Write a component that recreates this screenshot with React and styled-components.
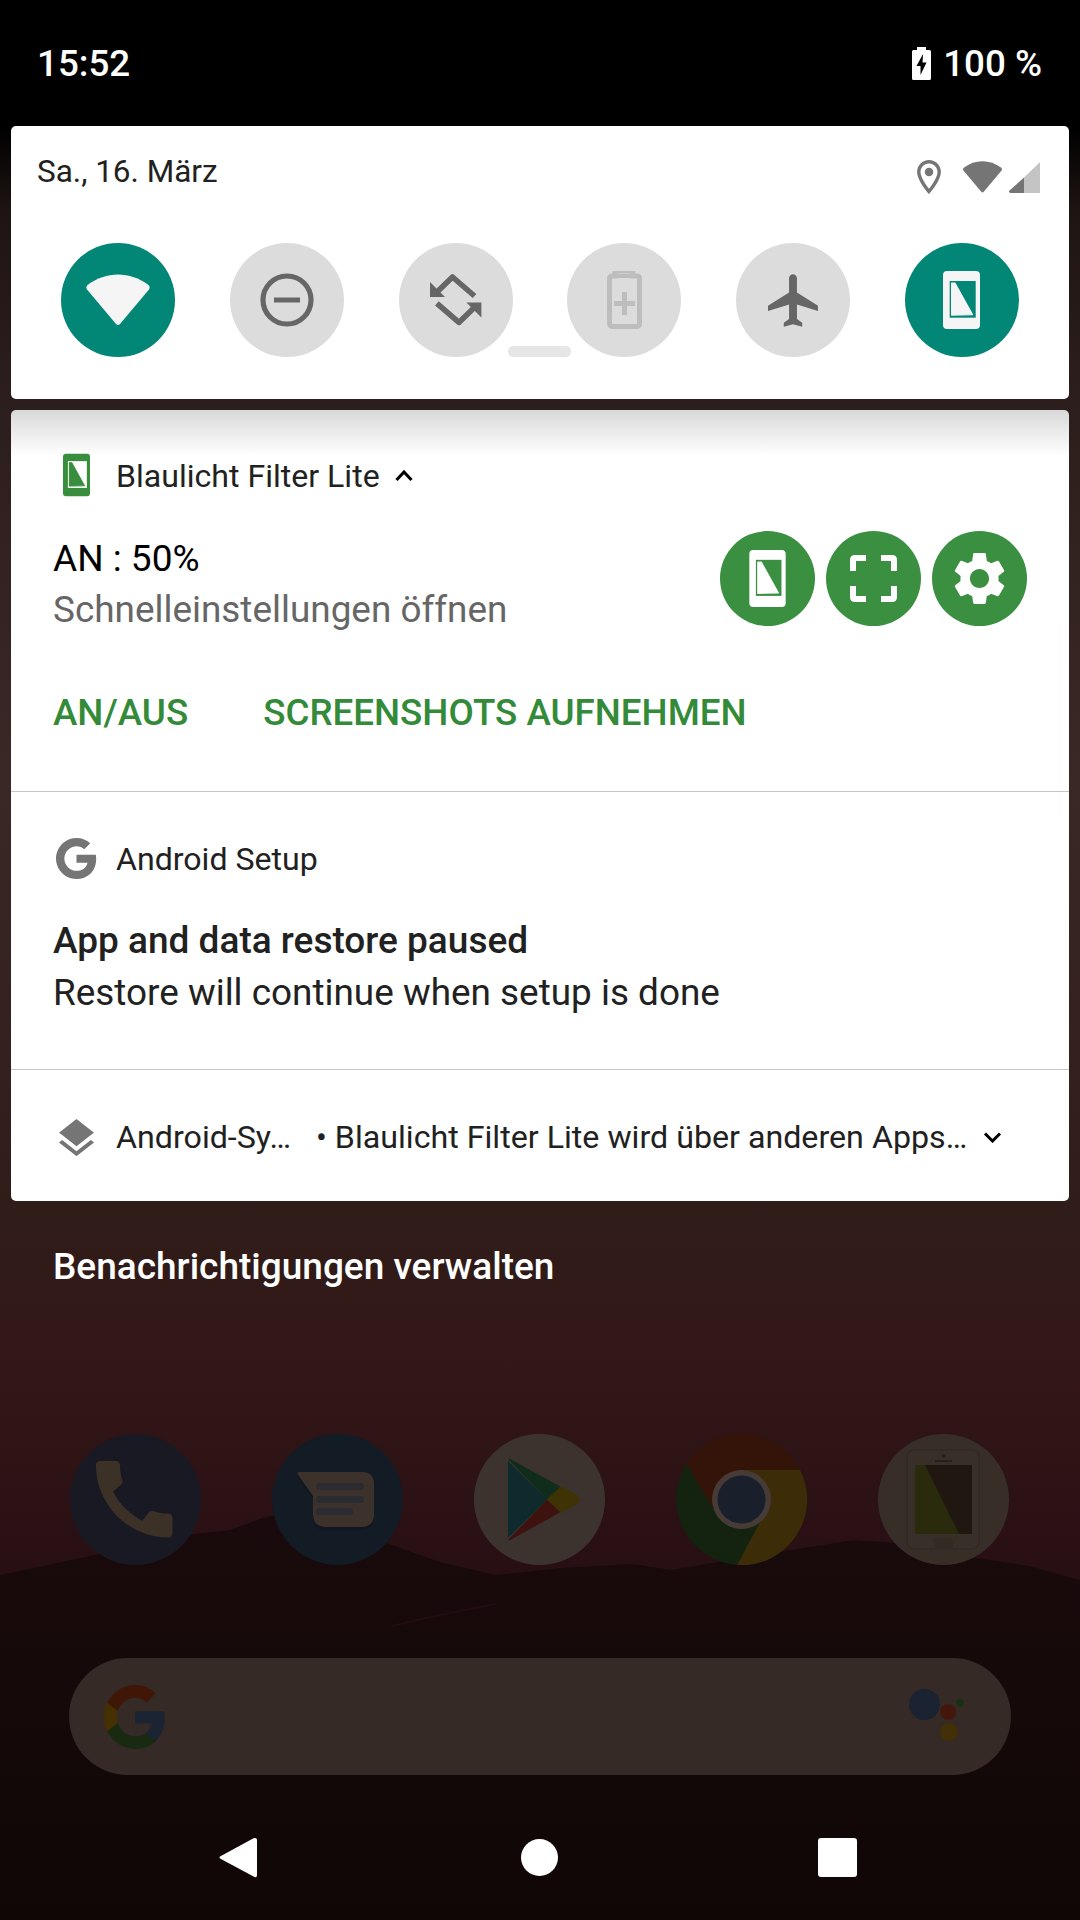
import React from "react";
import styled, { createGlobalStyle } from "styled-components";

const Global = createGlobalStyle`
  html, body { margin: 0; padding: 0; background: #000; }
  * { box-sizing: border-box; }
`;

const Screen = styled.div`
  position: relative;
  width: 1080px;
  height: 1920px;
  overflow: hidden;
  display: flex;
  flex-direction: column;
  font-family: Roboto, "Liberation Sans", sans-serif;
  background: linear-gradient(
    180deg,
    #000 0,
    #000 126px,
    #1e1513 210px,
    #2c1e1c 400px,
    #3a2825 780px,
    #301d1a 1200px,
    #321616 1400px,
    #280f14 1570px
  );
`;

const Wallpaper = styled.svg`
  position: absolute;
  left: 0;
  top: 1500px;
  width: 1080px;
  height: 420px;
`;

const StatusBar = styled.div`
  height: 126px;
  flex: none;
  display: flex;
  align-items: center;
  justify-content: space-between;
  padding: 0 38px 0 37px;
  color: #fff;
  font-size: 36.75px;
  font-weight: 500;
  position: relative;
`;

const StatusRight = styled.div`
  display: flex;
  align-items: center;
  gap: 12px;
`;

const ChargingBattery = styled.svg`
  width: 19px;
  height: 33px;
  margin-top: 1px;
`;

const Card = styled.div`
  position: relative;
  margin: 0 11px;
  background: #fff;
  border-radius: 5px;
  flex: none;
`;

const QsCard = styled(Card)`
  height: 273px;
  padding: 0 26px;
`;

const QsHeader = styled.div`
  height: 117px;
  display: flex;
  align-items: center;
  justify-content: space-between;
  padding: 0 3px 27px 0;
  color: #212121;
  font-size: 31.5px;
`;

const QsStatusIcons = styled.div`
  display: flex;
  align-items: center;
  gap: 21px;
  padding-top: 11px;
`;

const GroupTight = styled.div`
  display: flex;
  gap: 6px;
  align-items: flex-end;
`;

const QsRow = styled.div`
  display: flex;
  justify-content: space-between;
  padding: 0 24px;
`;

const QsTile = styled.div`
  width: 114px;
  height: 114px;
  border-radius: 50%;
  flex: none;
  display: flex;
  align-items: center;
  justify-content: center;
  background: ${(p) => (p.$on ? "#028675" : "#dcdcdc")};
`;

const Handle = styled.div`
  position: absolute;
  left: 497px;
  top: 220px;
  width: 63px;
  height: 11px;
  border-radius: 5px;
  background: #e6e6e6;
`;

const NotifCard = styled(Card)`
  margin-top: 11px;
  height: 791px;
  display: flex;
  flex-direction: column;
  background: linear-gradient(180deg, #d8d8d8 0, #ffffff 46px);
`;

const NotifFirst = styled.section`
  height: 382px;
  flex: none;
  border-bottom: 1.5px solid #c6c6c6;
  padding: 43px 42px 0 42px;
`;

const NotifSecond = styled.section`
  height: 278px;
  flex: none;
  border-bottom: 1.5px solid #c6c6c6;
  padding: 44px 34px 0 42px;
`;

const NotifThird = styled.section`
  flex: 1;
  display: flex;
  align-items: center;
  padding: 3px 67px 0 42px;
`;

const HeaderLine = styled.div`
  display: flex;
  align-items: center;
  height: 44px;
`;

const IconSlot = styled.div`
  width: 63px;
  flex: none;
  display: flex;
  align-items: center;
  padding-left: ${(p) => p.$pad || 0}px;
`;

const AppName = styled.span`
  font-size: 32.1px;
  padding-top: 2px;
  color: #212121;
  white-space: nowrap;
`;

const ChevronUp = styled.svg`
  width: 18px;
  height: 11px;
  margin-left: 15px;
`;

const ChevronDown = styled.svg`
  width: 19px;
  height: 11px;
  flex: none;
`;

const Body = styled.div`
  display: flex;
  justify-content: space-between;
  align-items: flex-start;
  margin-top: 34px;
`;

const TextCol = styled.div`
  display: flex;
  flex-direction: column;
  padding-top: 2px;
`;

const Title = styled.div`
  font-size: 37px;
  line-height: 51px;
  color: ${(p) => (p.$strong ? "#212121" : "#000")};
  font-weight: ${(p) => (p.$strong ? 500 : 400)};
`;

const SubText = styled.div`
  font-size: 36.9px;
  line-height: 51px;
  margin-top: ${(p) => p.$gap || 0}px;
  color: ${(p) => p.$color};
`;

const ActionCircles = styled.div`
  display: flex;
  gap: 11px;
`;

const ActionCircle = styled.div`
  width: 95px;
  height: 95px;
  border-radius: 50%;
  background: #3a8f40;
  display: flex;
  align-items: center;
  justify-content: center;
`;

const Actions = styled.div`
  display: flex;
  gap: 75px;
  margin-top: 56px;
`;

const ActionText = styled.span`
  font-size: 36.75px;
  font-weight: 500;
  line-height: 44px;
  color: #338a38;
`;

const SetupText = styled.div`
  margin-top: 35px;
`;

const CollapsedName = styled.span`
  font-size: 32.2px;
  color: #212121;
  width: 200px;
  flex: none;
  white-space: nowrap;
`;

const CollapsedText = styled.span`
  font-size: 32.2px;
  color: #212121;
  flex: 1;
  white-space: nowrap;
`;

const ManageLink = styled.div`
  flex: none;
  padding: 42px 0 0 53px;
  height: 233px;
  color: #fff;
  font-size: 37px;
  font-weight: 500;
  line-height: 48px;
  position: relative;
`;

const Hotseat = styled.div`
  position: relative;
  flex: none;
  height: 224px;
  display: flex;
  justify-content: space-between;
  padding: 0 71px 0 70px;
`;

const AppIcon = styled.svg`
  width: 131px;
  height: 131px;
  flex: none;
`;

const SearchBar = styled.div`
  position: relative;
  flex: none;
  margin: 0 69px;
  height: 117px;
  border-radius: 59px;
  background: #352a26;
  display: flex;
  align-items: center;
  justify-content: space-between;
  padding: 0 42px 0 35px;
`;

const AssistantDots = styled.svg`
  width: 60px;
  height: 60px;
  margin-top: 5px;
`;

const NavBar = styled.div`
  position: relative;
  flex: none;
  height: 145px;
  display: flex;
  align-items: center;
  padding: 20px 0 0 219px;
`;

const NavSlot = styled.div`
  width: ${(p) => p.$w}px;
  flex: none;
  display: flex;
  align-items: center;
`;

const HomeDot = styled.div`
  width: 37px;
  height: 37px;
  border-radius: 50%;
  background: #fff;
`;

const RecentBox = styled.div`
  width: 39px;
  height: 39px;
  border-radius: 3px;
  background: #fff;
`;

const FilterIcon = ({ w, h, body, screen, tri }) => (
  <svg width={w} height={h} viewBox="0 0 37 58">
    <rect x="0" y="0" width="37" height="58" rx="4" fill={body} />
    <rect x="6.7" y="10" width="26" height="36.7" fill={screen} />
    <path
      d="M8.7 12.3 L12 12.3 L29.4 43.6 L8.7 44 Z"
      fill={tri}
      stroke={tri}
      strokeWidth="1.4"
      strokeLinejoin="round"
    />
  </svg>
);

const Fan = ({ w, h, fill }) => (
  <svg width={w} height={h} viewBox="0 0 64 52">
    <path
      d="M1.5 11 C20 -3 44 -3 62.5 11 Q64.5 13 63 15.5 L34 50 Q32 52 30 50 L1 15.5 Q-.5 13 1.5 11Z"
      fill={fill}
    />
  </svg>
);

const GoogleG = ({ size, w, h, blue, green, yellow, red }) => (
  <svg width={w || size} height={h || size} viewBox="1 1 22 22" preserveAspectRatio="none">
    <path
      d="M22.56 12.25c0-.78-.07-1.53-.2-2.25H12v4.26h5.92c-.26 1.37-1.04 2.53-2.21 3.31v2.77h3.57c2.08-1.92 3.28-4.74 3.28-8.09z"
      fill={blue}
    />
    <path
      d="M12 23c2.97 0 5.46-.98 7.28-2.66l-3.57-2.77c-.98.66-2.23 1.06-3.71 1.06-2.86 0-5.29-1.93-6.16-4.53H2.18v2.84C3.99 20.53 7.7 23 12 23z"
      fill={green}
    />
    <path
      d="M5.84 14.09c-.22-.66-.35-1.36-.35-2.09s.13-1.43.35-2.09V7.07H2.18C1.43 8.55 1 10.22 1 12s.43 3.45 1.18 4.93l2.85-2.22.81-.62z"
      fill={yellow}
    />
    <path
      d="M12 5.38c1.62 0 3.06.56 4.21 1.64l3.15-3.15C17.45 2.09 14.97 1 12 1 7.7 1 3.99 3.47 2.18 7.07l3.66 2.84c.87-2.6 3.3-4.53 6.16-4.53z"
      fill={red}
    />
  </svg>
);

const RotateHalf = () => (
  <>
    <path
      d="M44.5 22 L22.5 3 L6 19"
      fill="none"
      stroke="#666"
      strokeWidth="5.6"
      strokeLinejoin="round"
    />
    <path d="M0 23 V8 L15 23 Z" fill="#666" />
  </>
);

const gearPath =
  "M19.14 12.94c.04-.3.06-.61.06-.94 0-.32-.02-.64-.07-.94l2.03-1.58c.18-.14.23-.41.12-.61l-1.92-3.32c-.12-.22-.37-.29-.59-.22l-2.39.96c-.5-.38-1.03-.7-1.62-.94l-.36-2.54c-.04-.24-.24-.41-.48-.41h-3.84c-.24 0-.43.17-.47.41l-.36 2.54c-.59.24-1.13.57-1.62.94l-2.39-.96c-.22-.08-.47 0-.59.22L2.74 8.87c-.12.21-.08.47.12.61l2.03 1.58c-.05.3-.09.63-.09.94s.02.64.07.94l-2.03 1.58c-.18.14-.23.41-.12.61l1.92 3.32c.12.22.37.29.59.22l2.39-.96c.5.38 1.03.7 1.62.94l.36 2.54c.05.24.24.41.48.41h3.84c.24 0 .44-.17.47-.41l.36-2.54c.59-.24 1.13-.56 1.62-.94l2.39.96c.22.08.47 0 .59-.22l1.92-3.32c.12-.22.07-.47-.12-.61l-2.01-1.58zM12 15.6c-1.98 0-3.6-1.62-3.6-3.6s1.62-3.6 3.6-3.6 3.6 1.62 3.6 3.6-1.62 3.6-3.6 3.6z";

export default function App() {
  return (
    <Screen>
      <Global />
      <Wallpaper viewBox="0 1500 1080 420">
        <defs>
          <linearGradient id="hill" x1="0" y1="0" x2="0" y2="1">
            <stop offset="0" stopColor="#1a0a0d" />
            <stop offset="0.45" stopColor="#150909" />
            <stop offset="1" stopColor="#100606" />
          </linearGradient>
        </defs>
        <path
          d="M0 1575 L95 1555 L185 1535 L230 1530 L262 1518 L290 1512 L330 1522 L392 1545 L440 1562 L496 1575 L560 1568 L634 1564 L671 1570 L730 1560 L778 1552 L854 1540 L910 1544 L964 1556 L1030 1566 L1080 1580 L1080 1920 L0 1920 Z"
          fill="url(#hill)"
        />
        <path d="M392 1626 Q450 1612 496 1604" stroke="#220c13" strokeWidth="2" fill="none" />
      </Wallpaper>

      <StatusBar>
        <span>15:52</span>
        <StatusRight>
          <ChargingBattery viewBox="0 0 19 33">
            <path
              d="M5 0 H14 V3 H17.5 Q19 3 19 4.5 V31.5 Q19 33 17.5 33 H1.5 Q0 33 0 31.5 V4.5 Q0 3 1.5 3 H5 Z"
              fill="#fff"
            />
            <path d="M11 7 L4.5 19 H8.5 V28 L14.5 15.5 H10.5 Z" fill="#000" />
          </ChargingBattery>
          <span>100 %</span>
        </StatusRight>
      </StatusBar>

      <QsCard>
        <QsHeader>
          <span>Sa., 16. März</span>
          <QsStatusIcons>
            <svg width="24" height="34" viewBox="5 2 14 20">
              <path
                d="M12 2C8.13 2 5 5.13 5 9c0 5.25 7 13 7 13s7-7.75 7-13c0-3.87-3.13-7-7-7zM7 9c0-2.76 2.24-5 5-5s5 2.24 5 5c0 2.88-2.88 7.19-5 9.88C9.92 16.21 7 11.85 7 9z"
                fill="#757575"
              />
              <circle cx="12" cy="9" r="2.5" fill="#757575" />
            </svg>
            <GroupTight>
              <Fan w={41} h={32} fill="#757575" />
              <svg width="31" height="31" viewBox="0 0 31 31">
                <path d="M31 0 V31 H15 V15.5 Z" fill="#c4c4c4" />
                <path d="M15 15.5 V31 H2 Q0 31 0 29.5 V29 Z" fill="#757575" />
              </svg>
            </GroupTight>
          </QsStatusIcons>
        </QsHeader>
        <QsRow>
          <QsTile $on>
            <Fan w={64} h={52} fill="#f5f5f5" />
          </QsTile>
          <QsTile>
            <svg width="54" height="54" viewBox="0 0 54 54">
              <circle cx="27" cy="27" r="24" fill="none" stroke="#666" strokeWidth="5.2" />
              <rect x="14" y="24.5" width="26" height="5" fill="#666" />
            </svg>
          </QsTile>
          <QsTile>
            <svg width="52" height="52" viewBox="0 0 52 52">
              <RotateHalf />
              <g transform="rotate(180 25.7 25.7)">
                <RotateHalf />
              </g>
            </svg>
          </QsTile>
          <QsTile>
            <svg width="35" height="58" viewBox="0 0 35 58">
              <path
                d="M8 5 V0 H26 V5 H30 Q32.5 5 32.5 8 V52 Q32.5 55.5 29 55.5 H6 Q2.5 55.5 2.5 52 V8 Q2.5 5 5 5 Z"
                fill="none"
                stroke="#bdbdbd"
                strokeWidth="5"
              />
              <path d="M8 3 H26 V7 H8 Z" fill="#bdbdbd" />
              <path d="M15 21 H20 V30 H28 V35 H20 V44 H15 V35 H7 V30 H15 Z" fill="#bdbdbd" />
            </svg>
          </QsTile>
          <QsTile>
            <svg width="50" height="53" viewBox="2 2 19 20">
              <path
                d="M21 16v-2l-8-5V3.5c0-.83-.67-1.5-1.5-1.5S10 2.67 10 3.5V9l-8 5v2l8-2.5V19l-2 1.5V22l3.5-1 3.5 1v-1.5L13 19v-5.5l8 2.5z"
                fill="#666"
              />
            </svg>
          </QsTile>
          <QsTile $on>
            <FilterIcon w={37} h={58} body="#f5f5f5" screen="#028675" tri="#f5f5f5" />
          </QsTile>
        </QsRow>
        <Handle />
      </QsCard>

      <NotifCard>
        <NotifFirst>
          <HeaderLine>
            <IconSlot $pad={10}>
              <FilterIcon w={27} h={44} body="#388e3c" screen="#fff" tri="#388e3c" />
            </IconSlot>
            <AppName>Blaulicht Filter Lite</AppName>
            <ChevronUp viewBox="0 0 18 11">
              <path d="M1.5 10 L9 2 L16.5 10" fill="none" stroke="#000" strokeWidth="3" />
            </ChevronUp>
          </HeaderLine>
          <Body>
            <TextCol>
              <Title>AN : 50%</Title>
              <SubText $color="#666">Schnelleinstellungen öffnen</SubText>
            </TextCol>
            <ActionCircles>
              <ActionCircle>
                <FilterIcon w={37} h={57} body="#fff" screen="#3a8f40" tri="#fff" />
              </ActionCircle>
              <ActionCircle>
                <svg width="47" height="47" viewBox="0 0 47 47">
                  <path
                    d="M3 16 V5 Q3 3 5 3 H16 M31 3 H42 Q44 3 44 5 V16 M44 31 V42 Q44 44 42 44 H31 M16 44 H5 Q3 44 3 42 V31"
                    fill="none"
                    stroke="#fff"
                    strokeWidth="6"
                  />
                </svg>
              </ActionCircle>
              <ActionCircle>
                <svg width="51" height="53" viewBox="2.6 2 18.8 20">
                  <path d={gearPath} fill="#fff" />
                </svg>
              </ActionCircle>
            </ActionCircles>
          </Body>
          <Actions>
            <ActionText>AN/AUS</ActionText>
            <ActionText>SCREENSHOTS AUFNEHMEN</ActionText>
          </Actions>
        </NotifFirst>
        <NotifSecond>
          <HeaderLine>
            <IconSlot $pad={3}>
              <GoogleG size={41} blue="#757575" green="#757575" yellow="#757575" red="#757575" />
            </IconSlot>
            <AppName>Android Setup</AppName>
          </HeaderLine>
          <SetupText>
            <Title $strong>App and data restore paused</Title>
            <SubText $color="#212121" $gap={0.5}>
              Restore will continue when setup is done
            </SubText>
          </SetupText>
        </NotifSecond>
        <NotifThird>
          <IconSlot $pad={5}>
            <svg width="37" height="37" viewBox="3 2 18 19">
              <path
                d="M11.99 18.54l-7.37-5.73L3 14.07l9 7 9-7-1.63-1.27-7.38 5.74zM12 16l7.36-5.73L21 9l-9-7-9 7 1.63 1.27L12 16z"
                fill="#757575"
              />
            </svg>
          </IconSlot>
          <CollapsedName>Android-Sy…</CollapsedName>
          <CollapsedText>• Blaulicht Filter Lite wird über anderen Apps…</CollapsedText>
          <ChevronDown viewBox="0 0 19 11">
            <path d="M2 1.5 L9.5 9 L17 1.5" fill="none" stroke="#000" strokeWidth="3" />
          </ChevronDown>
        </NotifThird>
      </NotifCard>

      <ManageLink>Benachrichtigungen verwalten</ManageLink>

      <Hotseat>
        <AppIcon viewBox="0 0 131 131">
          <circle cx="65.5" cy="65.5" r="65.5" fill="#191924" />
          <g transform="translate(26 27) scale(4.25)">
            <path
              transform="translate(-3 -3)"
              d="M20.01 15.38c-1.23 0-2.42-.2-3.53-.56-.35-.12-.74-.03-1.01.24l-1.57 1.97c-2.83-1.35-5.48-3.9-6.89-6.83l1.95-1.66c.27-.28.35-.67.24-1.02-.37-1.11-.56-2.3-.56-3.53 0-.54-.45-.99-.99-.99H4.19C3.65 3 3 3.24 3 3.99 3 13.28 10.73 21 20.01 21c.71 0 .99-.63.99-1.18v-3.45c0-.54-.45-.99-.99-.99z"
              fill="#3b3127"
            />
          </g>
        </AppIcon>
        <AppIcon viewBox="0 0 131 131">
          <circle cx="65.5" cy="65.5" r="65.5" fill="#131b25" />
          <path
            d="M27 41 H90 Q102 41 102 53 V83 Q102 96 89 96 H54 Q41 96 41 83 V65 L26 44 Q25 41 27 41Z"
            fill="#10151d"
            opacity=".7"
          />
          <path
            d="M27 38 H90 Q102 38 102 50 V80 Q102 93 89 93 H54 Q41 93 41 80 V62 L26 41 Q25 38 27 38Z"
            fill="#3c322b"
          />
          <rect x="44" y="49" width="48" height="7" rx="3.5" fill="#2a2c31" />
          <rect x="44" y="62" width="48" height="7" rx="3.5" fill="#2a2c31" />
          <rect x="44" y="74" width="37" height="7" rx="3.5" fill="#2a2c31" />
        </AppIcon>
        <AppIcon viewBox="0 0 131 131">
          <circle cx="65.5" cy="65.5" r="65.5" fill="#3d332e" />
          <path d="M34 27 L73 65.5 L34 104 Z" fill="#0f2a2c" />
          <path d="M34 25 Q36 24 38 26 L87 53 L73 65.5 Z" fill="#102c1a" />
          <path d="M34 106 Q36 107 38 105 L87 78 L73 65.5 Z" fill="#3e120f" />
          <path d="M87 52 L104 62 Q107 65.5 104 69 L87 79 L73 65.5 Z" fill="#3f3204" />
        </AppIcon>
        <AppIcon viewBox="0 0 131 131">
          <circle cx="65.5" cy="65.5" r="65.5" fill="#132310" />
          <path d="M10.7 29.3 A65.5 65.5 0 0 1 124 36 L65.5 36 L35.7 72.7 Z" fill="#341408" />
          <path d="M124 36 A65.5 65.5 0 0 1 61 131 L87 82.7 L65.5 36 Z" fill="#3d2c08" />
          <circle cx="65.5" cy="65.5" r="29.5" fill="#463b37" />
          <circle cx="65.5" cy="65.5" r="24" fill="#1a1f2c" />
        </AppIcon>
        <AppIcon viewBox="0 0 131 131">
          <circle cx="65.5" cy="65.5" r="65.5" fill="#372e28" />
          <rect x="29" y="16" width="72" height="99" rx="7" fill="#382f29" stroke="#332a24" strokeWidth="2" />
          <rect x="37" y="31" width="57" height="69" fill="#201710" />
          <path d="M37 31 H47 L81 100 H37 Z" fill="#2a2a0c" />
          <circle cx="65.5" cy="22" r="2" fill="#282018" />
          <rect x="57" y="26" width="17" height="2" fill="#282018" />
          <rect x="56" y="104" width="19" height="10" rx="2" fill="#332a24" />
        </AppIcon>
      </Hotseat>

      <SearchBar>
        <GoogleG w={62} h={64} blue="#1b2432" green="#182a10" yellow="#443000" red="#401607" />
        <AssistantDots viewBox="0 0 60 60">
          <circle cx="15.5" cy="15.5" r="15.5" fill="#1b2231" />
          <circle cx="39" cy="23" r="8" fill="#44170c" />
          <circle cx="40" cy="43" r="9" fill="#443006" />
          <circle cx="51" cy="14" r="4" fill="#1a3012" />
        </AssistantDots>
      </SearchBar>

      <NavBar>
        <NavSlot $w={302}>
          <svg width="38" height="41" viewBox="0 0 38 41">
            <path d="M36 1 Q38 1 38 3 V38 Q38 41 35.5 40 L1 21.5 Q0 20.5 1 19.5 L35 1 Z" fill="#fff" />
          </svg>
        </NavSlot>
        <NavSlot $w={297}>
          <HomeDot />
        </NavSlot>
        <NavSlot $w={39}>
          <RecentBox />
        </NavSlot>
      </NavBar>
    </Screen>
  );
}
